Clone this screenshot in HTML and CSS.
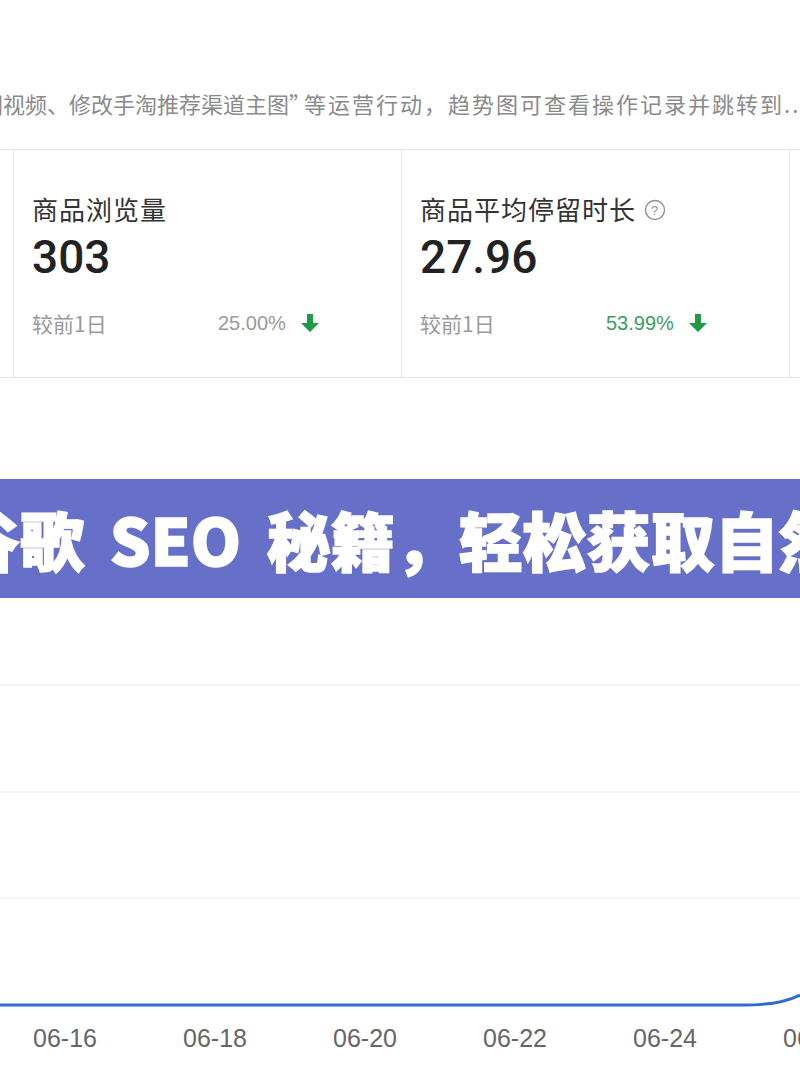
FILE: index.html
```html
<!DOCTYPE html>
<html lang="zh-CN">
<head>
    <meta charset="UTF-8">
    <meta name="viewport" content="width=device-width, initial-scale=1.0">
    <title>商品数据 - 趋势</title>
    <link rel="stylesheet" href="styles.css">
</head>
<body>

<div class="page">
    <p class="notice"><span class="notice-head">图视频、修改手淘推荐渠道主图<span class="quote">”</span></span><span class="notice-tail">等运营行动，趋势图可查看操作记录并跳转到...</span></p>

    <div class="stats">
        <div class="card"></div>

        <div class="card">
            <div class="card-title">商品浏览量</div>
            <div class="card-value">303</div>
            <div class="card-compare">
                <span class="compare-label">较前1日</span>
                <span class="compare-rate">25.00%</span>
                <svg class="arrow" viewBox="0 0 20 18" width="20" height="18">
                    <path d="M7 0h6v9h6l-9 9-9-9h6z" fill="#1f9a45"/>
                </svg>
            </div>
        </div>

        <div class="card">
            <div class="card-title">商品平均停留时长
                <svg class="help" viewBox="0 0 22 22" width="22" height="22">
                    <circle cx="11" cy="11" r="9.5" fill="none" stroke="#8f8f8f" stroke-width="1.4"/>
                    <text x="11" y="15.5" text-anchor="middle" font-size="13" font-family="Liberation Sans, sans-serif" fill="#8f8f8f">?</text>
                </svg>
            </div>
            <div class="card-value">27.96</div>
            <div class="card-compare">
                <span class="compare-label">较前1日</span>
                <span class="compare-rate green">53.99%</span>
                <svg class="arrow" viewBox="0 0 20 18" width="20" height="18">
                    <path d="M7 0h6v9h6l-9 9-9-9h6z" fill="#1f9a45"/>
                </svg>
            </div>
        </div>

        <div class="card"></div>
    </div>

    <div class="chart">
        <svg class="chart-lines" viewBox="0 0 800 450" width="800" height="450">
            <line x1="0" y1="20" x2="800" y2="20" stroke="#f2f2f4" stroke-width="1.5"/>
            <line x1="0" y1="126" x2="800" y2="126" stroke="#f2f2f4" stroke-width="1.5"/>
            <line x1="0" y1="233" x2="800" y2="233" stroke="#f2f2f4" stroke-width="1.5"/>
            <line x1="0" y1="339" x2="800" y2="339" stroke="#f2f2f4" stroke-width="1.5"/>
            <path d="M0 446 H745 C768 446 788 442 800 436" fill="none" stroke="#2f6bd0" stroke-width="3"/>
        </svg>
        <div class="x-axis">
            <span>06-16</span>
            <span>06-18</span>
            <span>06-20</span>
            <span>06-22</span>
            <span>06-24</span>
            <span>06-26</span>
        </div>
    </div>

    <div class="banner">谷歌 SEO 秘籍，轻松获取自然流量</div>
</div>

</body>
</html>
```

FILE: styles.css
```css
body {
    margin: 0;
    padding: 0;
    background-color: #fff;
    font-family: "Noto Sans CJK SC", "Noto Sans", sans-serif;
}

.page {
    position: relative;
    width: 800px;
    height: 1080px;
    overflow: hidden;
}

/* top hint line, cut at both edges */
.notice {
    margin: 0 0 0 -19px;
    padding-top: 89px;
    height: 60px;
    font-size: 22px;
    line-height: 28px;
    color: #8a8a8a;
    white-space: nowrap;
}

.notice .quote {
    letter-spacing: -7px;
}

.notice-tail {
    letter-spacing: 2px;
}

.stats {
    display: flex;
    margin-left: -375px;
    border-top: 1px solid #e6e6e6;
    border-bottom: 1px solid #e6e6e6;
    height: 227px;
}

.card {
    flex: 0 0 388px;
    box-sizing: border-box;
    border-left: 1px solid #e6e6e6;
    padding: 44px 0 0 18px;
}

.card-title {
    display: flex;
    align-items: center;
    gap: 8px;
    font-size: 26px;
    line-height: 30px;
    letter-spacing: 1px;
    color: #333;
}

.help {
    margin-top: 2px;
}

.card-value {
    margin-top: 8px;
    font-family: Roboto, "Noto Sans", sans-serif;
    font-weight: 500;
    font-size: 46px;
    line-height: 50px;
    color: #222;
}

.card-compare {
    display: flex;
    align-items: center;
    margin-top: 29px;
    height: 24px;
}

.compare-label {
    width: 186px;
    font-size: 21px;
    color: #9a9a9a;
}

.compare-rate {
    font-family: "Liberation Sans", Arial, sans-serif;
    font-size: 20px;
    color: #9a9a9a;
}

.compare-rate.green {
    color: #3b9b63;
}

.arrow {
    margin-left: 14px;
}

.chart {
    padding-top: 181px;
}

.chart-lines {
    display: block;
}

.x-axis {
    display: flex;
    margin: 14px 0 0 -10px;
    line-height: 30px;
}

.x-axis span {
    flex: 0 0 150px;
    text-align: center;
    font-family: "Liberation Sans", Arial, sans-serif;
    font-size: 25px;
    color: #666;
}

/* title strip laid over the screenshot */
.banner {
    position: absolute;
    top: 479px;
    left: 0;
    right: 0;
    height: 119px;
    text-indent: -44px;
    background-color: #6770c8;
    color: #fff;
    font-size: 64px;
    font-weight: 900;
    line-height: 119px;
    word-spacing: 11px;
    -webkit-text-stroke: 1.5px #fff;
    white-space: nowrap;
    overflow: hidden;
}
```
